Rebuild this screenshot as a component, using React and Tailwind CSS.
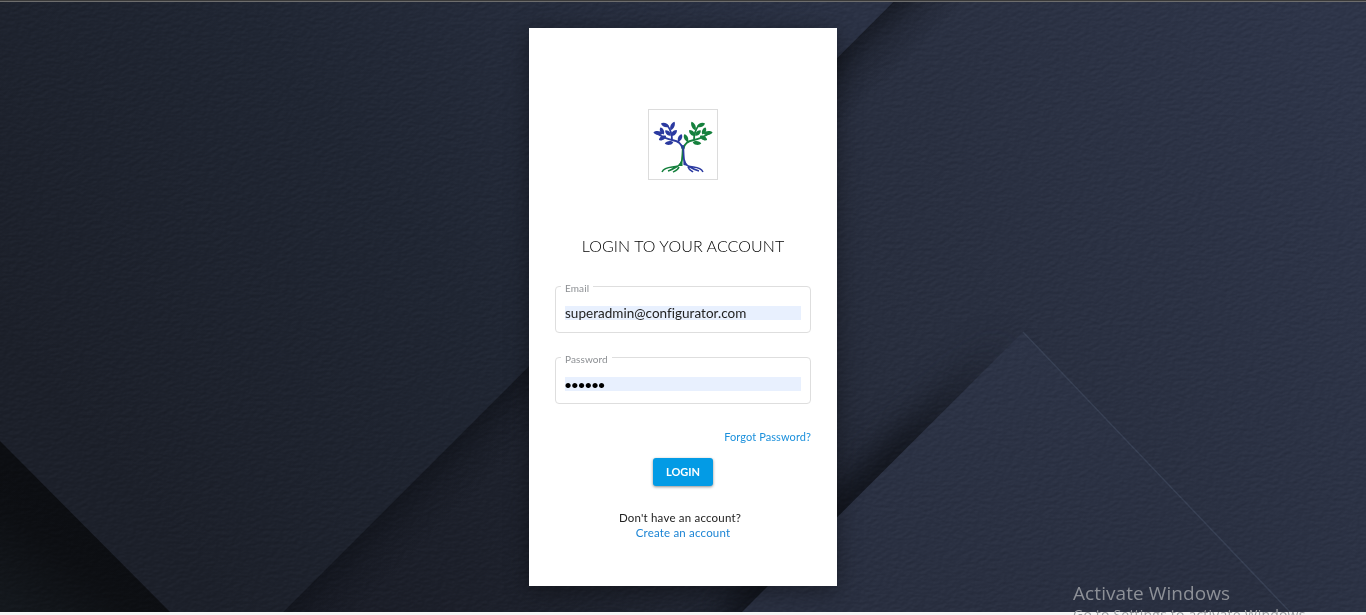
import React from "react";

function PaperBackground() {
  return (
    <svg
      className="absolute inset-0 h-full w-full"
      viewBox="0 0 1366 615"
      preserveAspectRatio="none"
      aria-hidden="true"
    >
      <defs>
        <linearGradient id="base" gradientUnits="userSpaceOnUse" x1="300" y1="615" x2="1340" y2="60">
          <stop offset="0" stopColor="#1a1d27" />
          <stop offset="0.2" stopColor="#1d212c" />
          <stop offset="0.55" stopColor="#282e3e" />
          <stop offset="1" stopColor="#2e3549" />
        </linearGradient>
        <linearGradient id="sheet" gradientUnits="userSpaceOnUse" x1="150" y1="520" x2="820" y2="0">
          <stop offset="0" stopColor="#1c202a" />
          <stop offset="0.45" stopColor="#202633" />
          <stop offset="1" stopColor="#2b3245" />
        </linearGradient>
        <linearGradient id="peak" gradientUnits="userSpaceOnUse" x1="1023" y1="332" x2="1010" y2="612">
          <stop offset="0" stopColor="#2d3447" />
          <stop offset="1" stopColor="#292f40" />
        </linearGradient>
        <linearGradient id="corner" gradientUnits="userSpaceOnUse" x1="70" y1="510" x2="0" y2="600">
          <stop offset="0" stopColor="#0c0e12" />
          <stop offset="0.35" stopColor="#0d0f13" />
          <stop offset="1" stopColor="#14181d" />
        </linearGradient>
        <linearGradient id="sheetShade" gradientUnits="userSpaceOnUse" x1="529" y1="369" x2="565" y2="405">
          <stop offset="0" stopColor="#0e1118" stopOpacity="0.6" />
          <stop offset="0.4" stopColor="#0e1118" stopOpacity="0.25" />
          <stop offset="1" stopColor="#0e1118" stopOpacity="0" />
        </linearGradient>
        <linearGradient id="peakFade" gradientUnits="userSpaceOnUse" x1="1015" y1="340" x2="900" y2="455">
          <stop offset="0" stopColor="#0e1118" stopOpacity="0" />
          <stop offset="1" stopColor="#0e1118" stopOpacity="0.9" />
        </linearGradient>
        <filter id="soft" x="-20%" y="-20%" width="140%" height="140%" colorInterpolationFilters="sRGB">
          <feGaussianBlur stdDeviation="15" />
        </filter>
        <filter id="grain" x="0" y="0" width="100%" height="100%" colorInterpolationFilters="sRGB">
          <feTurbulence type="fractalNoise" baseFrequency="0.17 0.3" numOctaves="3" seed="4" />
          <feColorMatrix values="0 0 0 0 0.5  0 0 0 0 0.5  0 0 0 0 0.5  1 0 0 0 0" />
          <feDiffuseLighting surfaceScale="1.2" lightingColor="#ffffff" diffuseConstant="0.71">
            <feDistantLight azimuth="240" elevation="45" />
          </feDiffuseLighting>
        </filter>
      </defs>
      <rect width="1366" height="615" fill="url(#base)" />
      <path d="M895 0 283 612 355 612 967 0Z" fill="url(#sheetShade)" />
      <path d="M1035 345 742 640 715 612 1003 325Z" fill="url(#peakFade)" filter="url(#soft)" />
      <path d="M1023 332 742 612H1290Z" fill="url(#peak)" />
      <path d="M1023 332 1290 612" stroke="#3a4257" strokeWidth="1.4" strokeOpacity="0.9" />
      <path d="M0 0H895L283 612H170L0 441Z" fill="url(#sheet)" />
      <path d="M0 441 170 612H0Z" fill="url(#corner)" />
      <rect width="1366" height="615" filter="url(#grain)" className="opacity-20 mix-blend-soft-light" />
    </svg>
  );
}

function Leaf({ x, y, r, l = 4 }) {
  return (
    <path
      d="M-1 0C-.6-.6.6-.6 1 0C.6.6-.6.6-1 0Z"
      transform={`translate(${x} ${y}) rotate(${r}) scale(${l + 0.6} 4.2)`}
    />
  );
}

function Branches() {
  return (
    <>
      <path d="M34.5 40C34 34 30 32 24 31C18 30 13 27 8 24M24 31C24 26 23 21 19 16M30 33C31 31 32 30 32 28" fill="none" strokeWidth="1.8" />
      <g stroke="none">
        <Leaf x={10} y={24} r={5} />
        <Leaf x={14} y={22} r={65} l={3.2} />
        <Leaf x={17} y={16} r={20} l={3.7} />
        <Leaf x={24.5} y={17} r={-65} l={4} />
        <Leaf x={14.5} y={29} r={-30} l={3.5} />
        <Leaf x={26} y={24} r={-45} l={3.4} />
        <Leaf x={21} y={34} r={-8} l={3.7} />
        <Leaf x={32} y={29} r={-65} l={3.4} />
        <Leaf x={20} y={24} r={45} l={3.2} />
      </g>
    </>
  );
}

function Logo() {
  return (
    <svg className="h-[71px] w-[70px] shrink-0 border border-[#dcdcdc]" viewBox="1 1 68 69" aria-label="Tree logo">
      <g fill="#15803d" stroke="#15803d" transform="translate(70 0) scale(-1 1)">
        <Branches />
      </g>
      <g fill="#2b3aa0" stroke="#2b3aa0">
        <Branches />
      </g>
      <path d="M34.5 37C35.5 47 35 54 30 57C25 59 17 57 14 63M30 57C25 60 23 61 20 62M31 58C30 61 27 62 25 63" fill="none" stroke="#15803d" strokeWidth="1.5" />
      <path d="M35 36C35.5 48 35.5 54 40 57C45 59 52 57 55 63M40 57C45 60 47 61 51 62M40 58C41 61 44 62 45 63" fill="none" stroke="#2b3aa0" strokeWidth="1.5" />
      <path d="M34 38 33.2 52 30 57 34.5 57V38Z" fill="#15803d" />
      <path d="M34.5 36 36.3 38V52L40 57 35.5 56Z" fill="#2b3aa0" />
    </svg>
  );
}

function Field({ label, type, value, inputClass }) {
  return (
    <fieldset className="flex h-[52px] w-64 flex-col rounded border border-[#dedede] px-[5px]">
      <legend className="h-[10px] px-1 text-[10px] leading-[10px] tracking-[0.1px] text-[#8c8f93]">
        <span className="relative top-[2px] block">{label}</span>
      </legend>
      <input
        type={type}
        defaultValue={value}
        aria-label={label}
        className={`ml-1 mt-[15px] block h-[14px] w-[236px] bg-[#e8f0fe] p-0 leading-[14px] outline-none ${inputClass}`}
      />
    </fieldset>
  );
}

export default function App() {
  return (
    <div className="relative flex h-[615px] w-full flex-col overflow-hidden bg-[#1e2330] font-[Lato,sans-serif]">
      <PaperBackground />
      <div className="relative h-[2px] shrink-0 border-b border-[#6d6d6d] bg-[#3a3a3a]" />
      <main className="relative flex grow justify-center pt-[26px]">
        <section className="flex h-[558px] w-[308px] flex-col items-center bg-white pt-[81px] shadow-[0_4px_22px_rgba(0,0,0,0.4)]">
          <Logo />
          <h1 className="mt-[56px] h-5 whitespace-nowrap font-['Lato_Light',Lato,sans-serif] text-base font-light leading-5 tracking-[0.08px] text-black">
            LOGIN TO YOUR ACCOUNT
          </h1>
          <form className="mt-[25px] flex flex-col items-center gap-[19px]">
            <Field label="Email" type="text" value="superadmin@configurator.com" inputClass="text-[13.5px] tracking-[0.02px] text-[#222]" />
            <Field label="Password" type="password" value="secret" inputClass="-indent-px pt-px text-[14px] tracking-[-1.4px] text-black" />
          </form>
          <a href="#forgot" className="mt-[25px] mr-[26px] h-4 self-end text-[11px] leading-4 tracking-[0.08px] text-[#1b90dc]">
            Forgot Password?
          </a>
          <button className="mt-[13px] h-[28px] w-[60px] shrink-0 rounded-[3px] bg-[#039be5] text-[11px] font-bold leading-[28px] text-white shadow-[0_1px_3px_rgba(0,0,0,0.45)]">
            LOGIN
          </button>
          <p className="mt-[24px] mr-[6px] h-[15px] text-[11.5px] leading-[15px] tracking-[0.2px] text-[#222]">Don't have an account?</p>
          <a href="#create" className="h-[15px] text-[11.5px] leading-[15px] tracking-[0.19px] text-[#1b84d4]">
            Create an account
          </a>
        </section>
      </main>
      <footer className="relative h-[3px] shrink-0 bg-[#f5f5f5]" />
      <div className="absolute left-[1073px] top-[581px] whitespace-nowrap font-['Open_Sans',sans-serif] text-[#8d9097]">
        <div className="text-[19px] leading-[24px] tracking-[0.08px]">Activate Windows</div>
        <div className="text-[14px] leading-[20px] tracking-[0.2px] text-[#a0a2a6]">Go to Settings to activate Windows.</div>
      </div>
    </div>
  );
}
